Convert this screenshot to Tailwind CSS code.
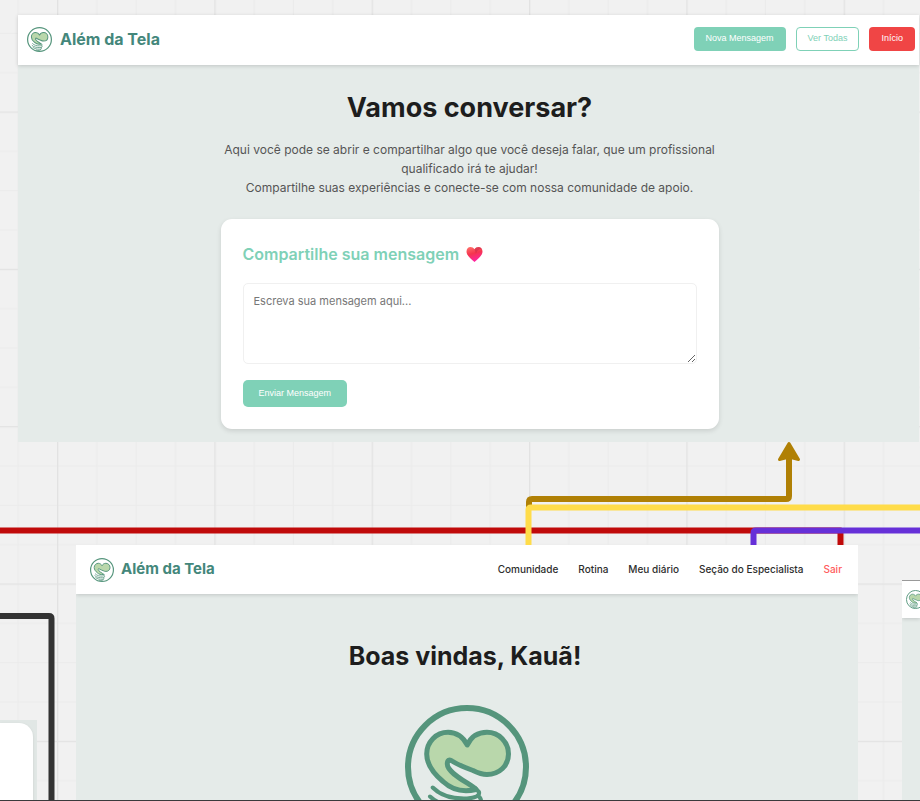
<!DOCTYPE html>
<html lang="pt-BR">
<head>
<meta charset="utf-8">
<meta name="viewport" content="width=device-width, initial-scale=1">
<title>Além da Tela</title>
<script src="https://cdn.jsdelivr.net/npm/@tailwindcss/browser@4"></script>
</head>
<body class="bg-[#f1f1f1] font-['Inter','Liberation_Sans',sans-serif]">
<div class="relative min-h-screen overflow-hidden border-b border-[#3a3a3c]">

  <!-- Board grid and connectors -->
  <svg class="absolute inset-0 h-full w-full" aria-hidden="true">
    <defs>
      <pattern id="grid" width="157.33" height="157.33" patternUnits="userSpaceOnUse" x="57" y="111.500">
        <g fill="none" stroke="#ebebeb" stroke-width="1.2">
          <path d="M39.83 0V158M79.17 0V158M118.500 0V158M0 39.83H158M0 79.17H158M0 118.500H158"/>
        </g>
        <path d="M.6 0V158M0 .6H158" fill="none" stroke="#e2e2e2" stroke-width="1.4"/>
      </pattern>
      <symbol id="logo" viewBox="0 0 124 124">
        <circle cx="62" cy="62" r="59" fill="none" stroke="#55957c" stroke-width="6"/>
        <path d="M62.3 40C58 32 51 27.300 43 27.300C31 27.300 21.700 37 21.700 49C21.700 60 29 69 38 76.500C46 84 56 88 71 84.500C68 80 42.300 69 42.300 59C42.300 55 44.500 54 47 56C54 60.500 61 63 68 65.500C73 68 77 69.500 82 69.500C94 69.500 103.500 61 103.500 49C103.500 37 94 27.300 82 27.300C73 27.300 66 32 62.300 40Z" fill="#b9d7ab" stroke="#55957c" stroke-width="5" stroke-linejoin="round"/>
        <path d="M27.700 82.500C36 91 49 94 62 93.500C70 93 75 91 74 87L70 83M25 91.500C35 101 50 102 64 102C72 102 79 98 74.500 92M30 102C39 109 50 110 63 110C71 110 74 106 72 102M47 115C56 118 67 117 69 111" fill="none" stroke="#55957c" stroke-width="4" stroke-linecap="round" stroke-linejoin="round"/>
      </symbol>
    </defs>
    <rect width="100%" height="100%" fill="url(#grid)"/>
    <g fill="none" stroke-width="6" stroke-linejoin="round">
      <path d="M0 530.500H840.500V548" stroke="#c00a0a"/>
      <path d="M529 510V502Q529 499 532 499H786Q789 499 789 496V455" stroke="#b08005"/>
      <path d="M528.500 548V510Q528.500 507.500 531 507.500H920" stroke="#ffdc4a"/>
      <path d="M753.500 548V533Q753.500 530.500 756 530.500H920" stroke="#6630d8"/>
      <path d="M0 616H49Q51.500 616 51.500 618.500V801" stroke="#333"/>
    </g>
    <path d="M789 443.500L798.500 459.500L789 457L779.500 459.500Z" fill="#b08005" stroke="#b08005" stroke-width="3" stroke-linejoin="round"/>
  </svg>

  <!-- Frame: new message -->
  <section class="absolute top-[15px] right-px left-[18px] bg-[#e5ebe9] pb-[13px]">
    <header class="flex h-[50px] items-center justify-between bg-white pr-1 pb-[2px] pl-[9px] shadow-[0_1px_4px_rgba(0,0,0,0.16)]">
      <a href="#" class="flex items-center gap-2 text-[16px] font-bold text-[#44877b]">
        <svg class="size-[25px]" aria-hidden="true"><use href="#logo"/></svg>
        Além da Tela
      </a>
      <nav class="flex gap-[10px] font-['Liberation_Sans',Arial,sans-serif] text-[9px]">
        <button class="h-6 rounded-[4px] bg-[#7fd1b7] px-3 text-white">Nova Mensagem</button>
        <button class="h-6 rounded-[4px] border border-[#7fd1b7] bg-white px-[11px] text-[#7fd1b7]">Ver Todas</button>
        <button class="h-6 rounded-[4px] bg-[#f04545] px-3 text-white">Início</button>
      </nav>
    </header>
    <main class="pt-6 pr-[26px] pl-7 text-center">
      <h1 class="text-[27px] leading-[38px] font-bold text-[#1d1d1d]">Vamos conversar?</h1>
      <p class="mx-auto mt-[13px] max-w-[500px] text-[12px] leading-[19px] text-[#555]">Aqui você pode se abrir e compartilhar algo que você deseja falar, que um profissional qualificado irá te ajudar!<br>Compartilhe suas experiências e conecte-se com nossa comunidade de apoio.</p>
      <form class="mx-auto mt-[22px] max-w-[498px] rounded-[11px] bg-white px-[22px] pt-[23px] pb-[22px] text-left shadow-[0_2px_5px_rgba(0,0,0,0.12)]">
        <h2 class="flex items-center gap-[7px] text-[16px] leading-6 font-semibold text-[#7fd1b7]">
          <label for="msg">Compartilhe sua mensagem</label>
          <svg class="size-[17px]" viewBox="0 0 17 17" aria-hidden="true">
            <defs><linearGradient id="heart" x1="0.2" y1="0" x2="0.5" y2="1"><stop offset="0" stop-color="#ff6e68"/><stop offset="0.45" stop-color="#f5354f"/><stop offset="1" stop-color="#ff23a8"/></linearGradient></defs>
            <path d="M8.500 3.300C7.500 1.700 6 1 4.500 1C2.100 1 .5 3 .5 5.500C.5 9.500 4.500 12.500 8.500 16C12.500 12.500 16.500 9.500 16.500 5.500C16.500 3 14.900 1 12.500 1C11 1 9.500 1.700 8.500 3.300Z" fill="url(#heart)"/>
            <path d="M8.500 3.300C9.500 1.700 11 1 12.500 1C14 1 15.300 2 16 3.300C13.500 2.500 11 4.500 10 7.500Z" fill="#c4264a" opacity=".5"/>
          </svg>
        </h2>
        <textarea id="msg" placeholder="Escreva sua mensagem aqui..." class="mt-[17px] block h-[81px] w-full resize-y rounded-[5px] border border-[#f0f0f0] bg-white px-[10px] py-[9px] text-[11px] leading-4 placeholder:text-[#777]"></textarea>
        <button type="button" class="mt-4 block h-[27px] rounded-[5px] bg-[#7fd1b7] px-4 font-['Liberation_Sans',Arial,sans-serif] text-[9px] text-white">Enviar Mensagem</button>
      </form>
    </main>
  </section>

  <!-- Frame: home -->
  <section class="absolute top-[545px] right-[62px] bottom-0 left-[76px] overflow-hidden bg-[#e5ebe9]">
    <header class="flex h-[49px] items-center justify-between bg-white pr-4 pl-[14px] shadow-[0_1px_4px_rgba(0,0,0,0.16)]">
      <a href="#" class="flex items-center gap-[7px] text-[15px] font-bold text-[#44877b]">
        <svg class="size-6" aria-hidden="true"><use href="#logo"/></svg>
        Além da Tela
      </a>
      <nav class="flex gap-5 text-[10px] font-medium text-[#2d2d2d]">
        <a href="#">Comunidade</a>
        <a href="#">Rotina</a>
        <a href="#">Meu diário</a>
        <a href="#">Seção do Especialista</a>
        <a href="#" class="text-[#ff5c5c]">Sair</a>
      </nav>
    </header>
    <main class="flex flex-col items-center pt-11">
      <h1 class="pr-1 text-[25px] leading-9 font-bold text-[#1d1d1d]">Boas vindas, Kauã!</h1>
      <svg class="mt-[31px] size-[124px] shrink-0" role="img" aria-label="Além da Tela"><use href="#logo"/></svg>
    </main>
  </section>

  <!-- Frame: partially visible on the right -->
  <section class="absolute top-[580px] right-0 bottom-0 left-[902px] overflow-hidden border-t border-[#999] bg-[#e5ebe9]">
    <header class="flex h-[37px] items-center bg-white pl-1 shadow-[0_1px_4px_rgba(0,0,0,0.16)]">
      <svg class="size-[19px] shrink-0" aria-hidden="true"><use href="#logo"/></svg>
    </header>
  </section>

  <!-- Frame: partially visible on the left -->
  <section class="absolute top-[720px] bottom-0 left-0 w-[37px] overflow-hidden bg-[#e1e7e5] pt-[3px] pr-1">
    <div class="h-full rounded-tr-[14px] bg-white shadow-[0_1px_3px_rgba(0,0,0,0.1)]"></div>
  </section>
</div>
</body>
</html>
